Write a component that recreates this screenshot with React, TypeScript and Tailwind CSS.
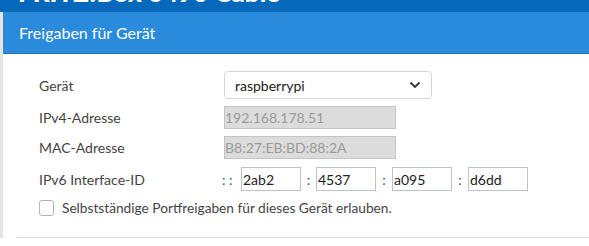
import React from "react";

const font = { fontFamily: "Lato, 'Open Sans', sans-serif" };

function Hex({ value }: { value: string }) {
  return (
    <input
      readOnly
      value={value}
      className="h-[24px] w-[60px] border border-[#b9c3cc] bg-white px-[1px] text-[14px] text-[#222] outline-none"
    />
  );
}

export default function App() {
  return (
    <div className="h-[246px] w-[589px] overflow-hidden bg-white" style={font}>
      <div className="h-[12px] overflow-hidden bg-[#0568bb]">
        <div className="-mt-[23px] pl-[18px] text-[26px] font-black leading-[30px] text-white">
          FRITZ!Box 6490 Cable
        </div>
      </div>
      <div className="flex">
        <div className="w-[3px] shrink-0 bg-[#e6e4df]" />
        <div className="flex-1">
          <div className="flex h-[42px] items-center border-b border-[#2273b8] bg-[#2a8bdd] pl-[16px] text-[16px] text-white">
            Freigaben für Gerät
          </div>
          <div className="pt-[16px] pl-[36px] text-[14px] text-[#444]">
            <div className="flex h-[30px] items-center">
              <span className="w-[185px]">Gerät</span>
              <div className="flex h-[28px] w-[208px] items-center justify-between rounded-[4px] border border-[#d4d4d4] bg-white pl-[10px] pr-[10px] text-[#222]">
                <span>raspberrypi</span>
                <svg width="12" height="8" viewBox="0 0 12 8" fill="none">
                  <path d="M1.5 1.5 6 6l4.5-4.5" stroke="#333" strokeWidth="1.8" />
                </svg>
              </div>
            </div>
            <div className="mt-[5px] flex h-[25px] items-center">
              <span className="w-[185px]">IPv4-Adresse</span>
              <div className="flex h-[23px] w-[172px] items-center border border-[#c4c4c4] bg-[#dcdcdc] text-[#9a9a9a]">
                192.168.178.51
              </div>
            </div>
            <div className="mt-[5px] flex h-[25px] items-center">
              <span className="w-[185px]">MAC-Adresse</span>
              <div className="flex h-[23px] w-[172px] items-center border border-[#c4c4c4] bg-[#dcdcdc] text-[#9a9a9a]">
                B8:27:EB:BD:88:2A
              </div>
            </div>
            <div className="mt-[7px] flex h-[24px] items-center">
              <span className="w-[183px]">IPv6 Interface-ID</span>
              <span className="w-[19px] text-[#555]">: :</span>
              <Hex value="2ab2" />
              <span className="w-[15px] text-center text-[#555]">:</span>
              <Hex value="4537" />
              <span className="w-[16px] text-center text-[#555]">:</span>
              <Hex value="a095" />
              <span className="w-[16px] text-center text-[#555]">:</span>
              <Hex value="d6dd" />
            </div>
            <div className="mt-[7px] flex items-center text-[13.7px]">
              <span className="mr-[8px] h-[16px] w-[15px] rounded-[3px] border border-[#b3b3b3] bg-white" />
              <span>Selbstständige Portfreigaben für dieses Gerät erlauben.</span>
            </div>
          </div>
          <div className="mt-[18px] ml-[14px] border-t border-[#d9d9d9]" />
        </div>
      </div>
    </div>
  );
}
